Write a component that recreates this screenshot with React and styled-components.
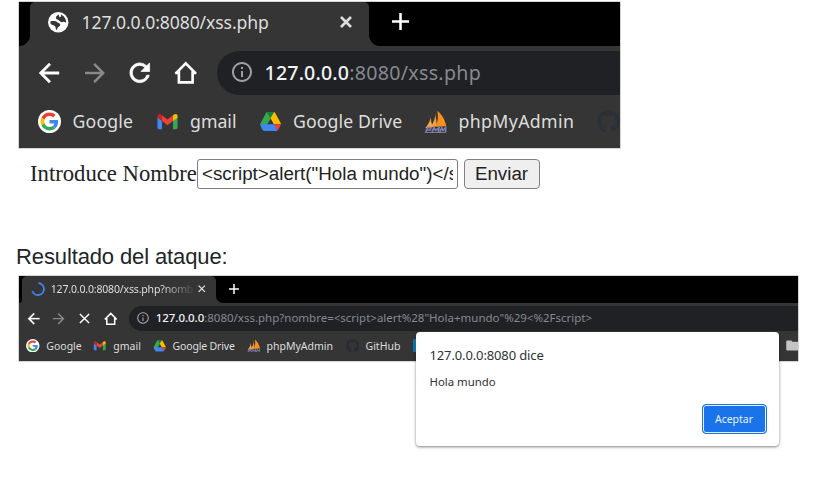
import React from "react";
import styled, { createGlobalStyle, css } from "styled-components";
import { MdArrowBack, MdArrowForward, MdRefresh, MdInfoOutline, MdFolder } from "react-icons/md";
import { FaGithub } from "react-icons/fa";

const GlobalStyle = createGlobalStyle`
  * { box-sizing: border-box; }
  body { margin: 0; background: #fff; overflow: hidden; }
`;

const Page = styled.main`
  width: 832px;
  height: 491px;
  display: flex;
  flex-direction: column;
  align-items: flex-start;
  padding: 2px 0 0 19px;
  background: #fff;
`;

const Browser = styled.section`
  flex: none;
  width: ${(p) => p.$width}px;
  height: ${(p) => p.$height}px;
  overflow: hidden;
  background: #353535;
  box-shadow: 0 0 0 0.5px #aaa;
  font-family: "Noto Sans", sans-serif;
  color: #dedede;
`;

const TabStrip = styled.div`
  display: flex;
  height: ${(p) => p.$height}px;
`;

const StripStart = styled.div`
  flex: none;
  width: ${(p) => p.$width}px;
  background: #000;
  border-bottom-right-radius: ${(p) => p.$radius}px;
`;

const TabShell = styled.div`
  flex: none;
  width: ${(p) => p.$width}px;
  background: linear-gradient(#000 0 8px, #353535 8px);
`;

const Tab = styled.div`
  display: flex;
  align-items: center;
  height: 100%;
  padding: ${(p) => p.$padding};
  gap: ${(p) => p.$gap}px;
  background: #353535;
  border-radius: ${(p) => p.$radius}px ${(p) => p.$radius}px 0 0;
`;

const TabTitle = styled.span`
  flex: none;
  width: ${(p) => p.$width}px;
  overflow: hidden;
  white-space: nowrap;
  font-size: ${(p) => p.$size}px;
  letter-spacing: ${(p) => p.$spacing || 0}px;
  ${(p) => p.$fade && css`mask-image: linear-gradient(90deg, #000 78%, transparent 102%);`}
`;

const StripRest = styled.div`
  flex: 1;
  display: flex;
  align-items: center;
  padding: ${(p) => p.$padding};
  background: #000;
  border-bottom-left-radius: ${(p) => p.$radius}px;
`;

const Toolbar = styled.div`
  display: flex;
  align-items: center;
  height: ${(p) => p.$height}px;
  padding: ${(p) => p.$padding};
`;

const NavButton = styled.span`
  flex: none;
  display: flex;
  justify-content: center;
  width: ${(p) => p.$width}px;
  color: ${(p) => (p.$dim ? "#898989" : "#fff")};
`;

const BackIcon = styled(MdArrowBack)`
  stroke: currentColor;
  stroke-width: 0.35px;
  path[fill="none"] { stroke: none; }
`;

const ReloadIcon = styled(MdRefresh)`
  stroke: currentColor;
  stroke-width: 0.6px;
  path[fill="none"] { stroke: none; }
`;

const Omnibox = styled.div`
  flex: 1;
  display: flex;
  align-items: center;
  height: 100%;
  gap: ${(p) => p.$gap}px;
  padding-left: ${(p) => p.$pad}px;
  padding-bottom: ${(p) => p.$lift || 0}px;
  margin-left: ${(p) => p.$margin}px;
  background: #202124;
  border-radius: 30px 0 0 30px;
  color: #9aa0a6;
`;

const Url = styled.span`
  white-space: nowrap;
  font-size: ${(p) => p.$size}px;
  letter-spacing: ${(p) => p.$spacing}px;
  color: #868a8f;
`;

const Host = styled.span`
  color: #f1f3f4;
  font-weight: 500;
  letter-spacing: ${(p) => p.$spacing}px;
`;

const BookmarkBar = styled.nav`
  display: flex;
  align-items: center;
  height: ${(p) => p.$height}px;
  padding-left: ${(p) => p.$pad}px;
  font-size: ${(p) => p.$size}px;
`;

const Bookmark = styled.div`
  flex: none;
  display: flex;
  align-items: center;
  width: ${(p) => p.$width}px;
  gap: ${(p) => p.$gap}px;
  white-space: nowrap;
  letter-spacing: ${(p) => p.$spacing || 0}px;
  svg { flex: none; }
`;

const BlueIcon = styled.span`
  width: 13px;
  height: 13px;
  background: #1687ca;
  border-left: 2px solid #0c75b6;
`;

const Form = styled.form`
  display: flex;
  align-items: center;
  height: 30px;
  margin: 11px 0 0 11px;
`;

const FieldLabel = styled.label`
  flex: none;
  width: 167px;
  font: 22.7px/26px "Liberation Serif", serif;
  color: #222;
  white-space: nowrap;
`;

const Field = styled.input`
  width: 261px;
  height: 30px;
  padding: 1px 4px;
  border: 1.5px solid #808080;
  border-radius: 3px;
  background: #fff;
  font: 18.8px "Liberation Sans", sans-serif;
  color: #222;
  outline: none;
`;

const Submit = styled.button`
  width: 76px;
  height: 30px;
  margin-left: 6px;
  padding: 0 1px 0 0;
  border: 1.5px solid #808080;
  border-radius: 4px;
  background: #efefef;
  font: 18.8px "Liberation Sans", sans-serif;
  color: #222;
`;

const Caption = styled.p`
  height: 28px;
  margin: 54px 0 5px -3px;
  font: 22px/28px "Liberation Sans", sans-serif;
  letter-spacing: -0.12px;
  color: #212529;
  white-space: nowrap;
`;

const Stage = styled.div`
  position: relative;
`;

const Dialog = styled.div`
  position: absolute;
  left: 397px;
  top: 56.5px;
  width: 362.5px;
  height: 114px;
  display: flex;
  flex-direction: column;
  padding: 13px 12px 12px 13.5px;
  background: #fff;
  border-radius: 4px;
  box-shadow: 0 1px 3px rgba(0, 0, 0, 0.5);
  font-family: "Noto Sans", sans-serif;
  color: #303134;
`;

const DialogTitle = styled.div`
  font-size: 13px;
  line-height: 20px;
  letter-spacing: -0.13px;
`;

const DialogText = styled.div`
  margin-top: 8.5px;
  font-size: 11.4px;
  line-height: 16px;
`;

const Accept = styled.button`
  align-self: flex-end;
  margin-top: auto;
  width: 65px;
  height: 30px;
  padding: 0;
  border: 1.5px solid #1a73e8;
  border-radius: 4px;
  background: #1a73e8;
  box-shadow: inset 0 0 0 1px #e4efff;
  font: 10.5px "Noto Sans", sans-serif;
  color: #e8f1ff;
`;

const Cross = ({ size, weight }) => (
  <svg width={size} height={size} viewBox="0 0 12 12" stroke="currentColor" strokeWidth={weight}>
    <path d="M1 1 11 11M11 1 1 11" />
  </svg>
);

const Plus = ({ size }) => (
  <svg width={size} height={size} viewBox="0 0 16 16" stroke="#fff" strokeWidth="2.4">
    <path d="M8 0V16M0 8H16" />
  </svg>
);

const Globe = ({ size }) => (
  <svg width={size} height={size} viewBox="0 0 24 24">
    <circle cx="12" cy="12" r="10" fill="#fff" />
    <path
      fill="#353535"
      d="M12.5 4.3C11 5 9.5 6.2 9.7 7.8C10 9.6 12 9.3 13 10.5C14 11.8 15.5 12.3 17.2 11.6C18.2 11.2 18.8 12.3 19.8 12.5C19.8 9 17.5 5.5 14.5 4.5L14.9 6.3L13.2 7.2z"
    />
    <path
      fill="#353535"
      d="M4.2 11.2C6.5 10.7 9.5 10.6 11 12C12 13 13.8 12.8 14 14.5C14.1 16.2 11.8 16.2 11.3 17.6L10.7 19.7C9.8 19.4 9.4 18.4 9.4 17.2C9.4 15 6.4 14.8 4.6 13.6z"
    />
  </svg>
);

const Home = ({ size }) => (
  <svg width={size} height={size} viewBox="0 0 24 24" fill="none" stroke="currentColor" strokeWidth="2.7">
    <path d="M1.6 12.9 12 2.4 22.4 12.9M5 10.5V21.9H19V10.5M1.2 12.3H6M18 12.3H22.8" />
  </svg>
);

const Spinner = ({ size }) => (
  <svg width={size} height={size} viewBox="0 0 14 14" fill="none" stroke="#4285f4" strokeWidth="1.8">
    <path d="M7.5 1A6 6 0 1 1 1.3 9" />
  </svg>
);

const GoogleIcon = ({ size }) => (
  <svg width={size} height={size} viewBox="0 0 48 48">
    <circle cx="24" cy="24" r="24" fill="#fff" />
    <g transform="translate(5.3 5.3) scale(.78)">
      <path fill="#EA4335" d="M24 9.5c3.54 0 6.71 1.22 9.21 3.6l6.85-6.85C35.9 2.38 30.47 0 24 0 14.62 0 6.51 5.38 2.56 13.22l7.98 6.19C12.43 13.72 17.74 9.5 24 9.5z" />
      <path fill="#4285F4" d="M46.98 24.55c0-1.57-.15-3.09-.38-4.55H24v9.02h12.94c-.58 2.96-2.26 5.48-4.78 7.18l7.73 6c4.51-4.18 7.09-10.36 7.09-17.65z" />
      <path fill="#FBBC05" d="M10.53 28.59A14.5 14.5 0 0 1 9.77 24c0-1.6.27-3.14.76-4.59l-7.98-6.19A23.9 23.9 0 0 0 0 24c0 3.88.92 7.54 2.56 10.78z" />
      <path fill="#34A853" d="M24 48c6.48 0 11.93-2.13 15.89-5.81l-7.73-6c-2.15 1.45-4.92 2.3-8.16 2.3-6.26 0-11.57-4.22-13.47-9.91l-7.98 6.19C6.51 42.62 14.62 48 24 48z" />
    </g>
  </svg>
);

const GmailIcon = ({ size }) => (
  <svg width={size} height={size} viewBox="0 0 24 24">
    <path fill="#4285F4" d="M1.5 7 6.3 11V20H3A1.5 1.5 0 0 1 1.5 18.5z" />
    <path fill="#34A853" d="M17.7 11 22.5 7V18.5A1.5 1.5 0 0 1 21 20H17.7z" />
    <path fill="#C5221F" d="M1.5 6.2C1.5 4.2 3.5 3.5 5 4.6L6.3 5.6V11.5L1.5 8z" />
    <path fill="#FBBC04" d="M22.5 6.2C22.5 4.2 20.5 3.5 19 4.6L17.7 5.6V11.5L22.5 8z" />
    <path fill="#EA4335" d="M6.3 5.6 12 9.9 17.7 5.6V11.5L12 15.8 6.3 11.5z" />
  </svg>
);

const DriveIcon = ({ size }) => (
  <svg width={size} height={size} viewBox="0 0 24 24">
    <path fill="#34A853" d="M8.5 2H12L14.2 5.5 5.4 20.6C4.4 21.5 3.5 20.6 3 19.7L1.4 15.5C1.2 15 1.3 14.3 1.6 13.8L7.4 2.8C7.7 2.2 8 2 8.5 2z" />
    <path fill="#188038" d="M8 2.2H15.5L12 8.5z" />
    <path fill="#FBBC04" d="M12 8.5 15.7 2.2C16.2 2.4 16.6 2.7 16.9 3.2L22.5 13.2C22.8 13.8 22.8 14.4 22.8 14.8H15.5z" />
    <path fill="#4285F4" d="M1.2 14.8H16L19.6 21.2C19 21.8 18.5 22 17.8 22H6C5.2 22 4.5 21.5 4.1 20.9z" />
    <path fill="#EA4335" d="M15.5 14.8H22.8C22.8 15.4 22.6 15.9 22.3 16.5L20.2 20.3C20 20.7 19.8 21 19.5 21.3z" />
  </svg>
);

const PmaIcon = ({ size }) => (
  <svg width={size} height={size} viewBox="0 0 24 24">
    <path fill="#f8a54a" d="M5.8 4.5C7.8 10 5.2 14 1.2 19L9 18z" />
    <path fill="#f7a03c" d="M11.6 2.6C12.4 8.5 9.5 13.5 6.8 18L13.6 17z" />
    <path fill="#f8901c" d="M13.9 .8C15.2 7 14.4 13 12 17.5L23.2 17C22 10 18.5 4.5 13.9 .8z" />
    <path fill="none" stroke="#7d82b5" strokeWidth="1.6" d="M1.8 23 4 18.3H7.3L6.5 20.8H3.2M8.2 23 10.5 18.3 12 21.2 15.8 18.3 14.8 23M16.6 23 18.5 18.5 19.8 21.4 22.6 18.3V23" />
    <path stroke="#b9bbd3" strokeWidth=".6" d="M.8 23.4H23.2" />
  </svg>
);

const HOST = "127.0.0.0";

export default function App() {
  return (
    <>
      <GlobalStyle />
      <Page>
        <Browser $width={601} $height={145.5}>
          <TabStrip $height={43.5}>
            <StripStart $width={11} $radius={11} />
            <TabShell $width={339}>
              <Tab $padding="0 0 4px 16px" $gap={11} $radius={5}>
                <Globe size={24.5} />
                <TabTitle $width={247} $size={17.6} $spacing={-0.1}>{HOST}:8080/xss.php</TabTitle>
                <Cross size={12} weight={2.6} />
              </Tab>
            </TabShell>
            <StripRest $padding="0 0 4px 23px" $radius={11}>
              <Plus size={17} />
            </StripRest>
          </TabStrip>
          <Toolbar $height={49} $padding="5px 0 0 7.5px">
            <NavButton $width={45.4}><BackIcon size={30} /></NavButton>
            <NavButton $width={45.4} $dim><MdArrowForward size={30} /></NavButton>
            <NavButton $width={45.4}><ReloadIcon size={29.5} /></NavButton>
            <NavButton $width={45.4}><Home size={23.5} /></NavButton>
            <Omnibox $gap={11} $pad={13} $margin={8.5} $lift={1}>
              <MdInfoOutline size={24} />
              <Url $size={19.6} $spacing={0.3}><Host $spacing={0.15}>{HOST}</Host>:8080/xss.php</Url>
            </Omnibox>
          </Toolbar>
          <BookmarkBar $height={53} $pad={19} $size={17.7}>
            <Bookmark $width={117.5} $gap={11.5} $spacing={0.15}><GoogleIcon size={23} />Google</Bookmark>
            <Bookmark $width={103.5} $gap={11.5}><GmailIcon size={23} />gmail</Bookmark>
            <Bookmark $width={165} $gap={11} $spacing={0.1}><DriveIcon size={23} />Google Drive</Bookmark>
            <Bookmark $width={172.5} $gap={11.5} $spacing={0.38}><PmaIcon size={23} />phpMyAdmin</Bookmark>
            <Bookmark $width={60} $gap={12}><FaGithub size={23} color="#293138" /></Bookmark>
          </BookmarkBar>
        </Browser>

        <Form onSubmit={(e) => e.preventDefault()}>
          <FieldLabel htmlFor="nombre">Introduce Nombre</FieldLabel>
          <Field id="nombre" defaultValue={'<script>alert("Hola mundo")</script>'} />
          <Submit type="submit">Enviar</Submit>
        </Form>

        <Caption>Resultado del ataque:</Caption>

        <Stage>
          <Browser $width={779} $height={85.5}>
            <TabStrip $height={27}>
              <StripStart $width={3} $radius={3} />
              <TabShell $width={193.5}>
                <Tab $padding="0 0 0 9px" $gap={5.7} $radius={5}>
                  <Spinner size={14} />
                  <TabTitle $width={142} $size={10.5} $spacing={-0.16} $fade>{HOST}:8080/xss.php?nomb</TabTitle>
                  <Cross size={7.5} weight={2.2} />
                </Tab>
              </TabShell>
              <StripRest $padding="0 0 0 13px" $radius={7}>
                <Plus size={10} />
              </StripRest>
            </TabStrip>
            <Toolbar $height={28.5} $padding="3px 0 0 1.3px">
              <NavButton $width={25.8}><BackIcon size={17.3} /></NavButton>
              <NavButton $width={25.8} $dim><MdArrowForward size={17.3} /></NavButton>
              <NavButton $width={25.8}><Cross size={11} weight={1.6} /></NavButton>
              <NavButton $width={25.8}><Home size={13.5} /></NavButton>
              <Omnibox $gap={6} $pad={7} $margin={5.3} $lift={1}>
                <MdInfoOutline size={14} />
                <Url $size={11.5} $spacing={0}>
                  <Host $spacing={-0.05}>{HOST}</Host>
                  {':8080/xss.php?nombre=<script>alert%28"Hola+mundo"%29<%2Fscript>'}
                </Url>
              </Omnibox>
            </Toolbar>
            <BookmarkBar $height={29} $pad={7.3} $size={10.5}>
              <Bookmark $width={67} $gap={6.5}><GoogleIcon size={13.5} />Google</Bookmark>
              <Bookmark $width={59.7} $gap={6.5}><GmailIcon size={13.5} />gmail</Bookmark>
              <Bookmark $width={94} $gap={6} $spacing={-0.15}><DriveIcon size={13.5} />Google Drive</Bookmark>
              <Bookmark $width={99} $gap={6}><PmaIcon size={13.5} />phpMyAdmin</Bookmark>
              <Bookmark $width={67} $gap={6}><FaGithub size={13.5} color="#272c32" />GitHub</Bookmark>
              <Bookmark $width={372.5} $gap={6}><BlueIcon /></Bookmark>
              <Bookmark $width={20} $gap={6}><MdFolder size={15} color="#c4c4c4" /></Bookmark>
            </BookmarkBar>
          </Browser>
          <Dialog role="alertdialog">
            <DialogTitle>{HOST}:8080 dice</DialogTitle>
            <DialogText>Hola mundo</DialogText>
            <Accept>Aceptar</Accept>
          </Dialog>
        </Stage>
      </Page>
    </>
  );
}
